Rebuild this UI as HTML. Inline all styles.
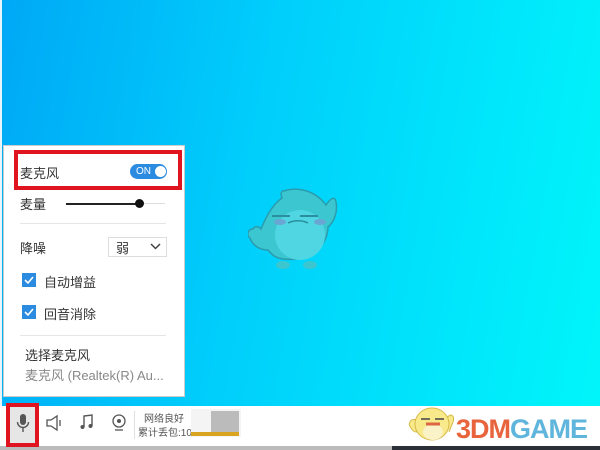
<!DOCTYPE html>
<html><head><meta charset="utf-8"><style>
*{margin:0;padding:0;box-sizing:border-box}
body{width:600px;height:450px;overflow:hidden;position:relative;font-family:"Liberation Sans","Noto Sans CJK SC",sans-serif;background:linear-gradient(100deg,#00a8f6 0%,#00cdfb 40%,#00e6fb 75%,#00f6fa 100%)}
.abs{position:absolute}
.panel{left:3px;top:145px;width:182px;height:252px;background:#fff;border:1px solid #ccc}
.t{font-size:13px;color:#333;position:absolute;white-space:nowrap}
.red{border:4px solid #e0141e;position:absolute}
.bar{left:0;top:406px;width:600px;height:40px;background:#fff}
</style></head><body>
<div class="abs" style="left:0;top:0;width:2px;height:406px;background:#e8f6fb"></div>
<div class="abs panel"></div>
<div class="t" style="left:20px;top:163px">麦克风</div>
<div class="abs" style="left:130px;top:164px;width:37px;height:15px;border-radius:8px;background:#2a8be0"></div>
<div class="abs" style="left:136px;top:166px;font-size:10px;line-height:11px;color:#fff">ON</div>
<div class="abs" style="left:155px;top:166px;width:11px;height:11px;border-radius:50%;background:#fff"></div>
<div class="red" style="left:14px;top:150px;width:168px;height:40px"></div>
<div class="t" style="left:20px;top:194px">麦量</div>
<div class="abs" style="left:66px;top:203px;width:74px;height:2px;background:#222"></div>
<div class="abs" style="left:140px;top:203px;width:25px;height:1px;background:#ddd"></div>
<div class="abs" style="left:135px;top:199px;width:9px;height:9px;border-radius:50%;background:#111"></div>
<div class="abs" style="left:20px;top:223px;width:146px;height:1px;background:#e6e6e6"></div>
<div class="t" style="left:20px;top:238px">降噪</div>
<div class="abs" style="left:108px;top:237px;width:59px;height:20px;border:1px solid #ddd"></div>
<div class="t" style="left:116px;top:238px">弱</div>
<svg class="abs" style="left:150px;top:243px" width="11" height="7"><path d="M1 1L5.5 5.5 10 1" fill="none" stroke="#444" stroke-width="1.5"/></svg>
<svg class="abs" style="left:22px;top:273px" width="14" height="14"><rect width="14" height="14" fill="#2a8be0"/><path d="M3 7l3 3 5-6" fill="none" stroke="#fff" stroke-width="1.6"/></svg>
<div class="t" style="left:44px;top:272px">自动增益</div>
<svg class="abs" style="left:22px;top:305px" width="14" height="14"><rect width="14" height="14" fill="#2a8be0"/><path d="M3 7l3 3 5-6" fill="none" stroke="#fff" stroke-width="1.6"/></svg>
<div class="t" style="left:44px;top:304px">回音消除</div>
<div class="abs" style="left:20px;top:335px;width:146px;height:1px;background:#e6e6e6"></div>
<div class="t" style="left:25px;top:345px">选择麦克风</div>
<div class="t" style="left:25px;top:365px;color:#888">麦克风 (Realtek(R) Au...</div>
<div class="abs bar"></div>
<div class="abs" style="left:0;top:446px;width:600px;height:4px;background:#bbb"></div>
<div class="abs" style="left:392px;top:446px;width:208px;height:4px;background:#2a2f38"></div>
<div class="abs" style="left:10px;top:407px;width:26px;height:36px;background:#e6e6e6"></div>
<svg class="abs" style="left:14px;top:412px" width="18" height="24"><rect x="6" y="2" width="6" height="11" rx="3" fill="#555"/><path d="M3.5 10a5.5 5.5 0 0 0 11 0M9 16v4" fill="none" stroke="#555" stroke-width="1.4"/></svg>
<div class="red" style="left:6px;top:403px;width:33px;height:44px"></div>
<svg class="abs" style="left:45px;top:414px" width="18" height="18"><path d="M2 6h4l6-4v14l-6-4H2z" fill="none" stroke="#555" stroke-width="1.3"/><path d="M15 6v6" stroke="#555" stroke-width="1.3"/></svg>
<svg class="abs" style="left:78px;top:413px" width="18" height="18"><path d="M6 14V3l8-1v11" fill="none" stroke="#555" stroke-width="1.4"/><circle cx="4.5" cy="14" r="2" fill="#555"/><circle cx="12.5" cy="13" r="2" fill="#555"/></svg>
<svg class="abs" style="left:110px;top:413px" width="18" height="20"><circle cx="9" cy="8" r="6" fill="none" stroke="#555" stroke-width="1.3"/><circle cx="9" cy="8" r="2" fill="#555"/><path d="M5 17h8" stroke="#555" stroke-width="1.3"/></svg>
<div class="abs" style="left:134px;top:411px;width:1px;height:28px;background:#e0e0e0"></div>
<div class="abs" style="left:144px;top:410px;font-size:10px;color:#555">网络良好</div>
<div class="abs" style="left:138px;top:424px;font-size:10px;color:#555">累计丢包:10</div>
<div class="abs" style="left:191px;top:409px;width:50px;height:28px;background:#f4f4f4"></div>
<div class="abs" style="left:211px;top:411px;width:28px;height:22px;background:#bbb"></div>
<div class="abs" style="left:191px;top:432px;width:48px;height:4px;background:#d9a520"></div>
<svg class="abs" style="left:248px;top:180px" width="105" height="92">
<path d="M34 18c-2-5 0-8 2-7 12-4 30-2 42 14 4-6 9-10 10-3 2 10-2 20-8 25 0 20-20 35-45 32-8-1-12-5-15-9-10 0-16-6-18-12-4-3-2-9 3-9 1-3 6-3 8 0 5-12 11-24 21-31z" fill="#3cc6cf" stroke="#2a9cae" stroke-width="1.5"/>
<ellipse cx="52" cy="55" rx="25" ry="25" fill="#4fd6e2"/>
<path d="M24 36h18M52 36h18" stroke="#2a8e9e" stroke-width="2"/>
<ellipse cx="32" cy="42" rx="6" ry="3" fill="#6aa6d4"/><ellipse cx="72" cy="42" rx="6" ry="3" fill="#6aa6d4"/>
<path d="M40 43c6-3 14-3 20 0" fill="none" stroke="#2a8e9e" stroke-width="1.5"/>
<ellipse cx="35" cy="85" rx="7" ry="4" fill="#3cc6cf"/><ellipse cx="62" cy="85" rx="7" ry="4" fill="#3cc6cf"/>
</svg>
<svg class="abs" style="left:407px;top:400px" width="50" height="45"><path d="M10 20c-6-2-10 3-6 8 3 5 6 4 8 4M40 18c4-6 8-2 6 4l-4 10" fill="#f8e98a" stroke="#d6b94a"/><ellipse cx="25" cy="24" rx="17" ry="16" fill="#f8e98a" stroke="#d6b94a"/><ellipse cx="26" cy="32" rx="10" ry="8" fill="#fbf3c8"/><path d="M14 19h9M28 19h9" stroke="#444" stroke-width="1.5"/><path d="M19 24h14" stroke="#d64" stroke-width="3"/></svg>
<div class="abs" style="left:456px;top:414px;font-size:27px;font-weight:bold;letter-spacing:-1px;line-height:30px"><span style="color:#e8643c">3DM</span><span style="color:#5fb5dc">GAME</span></div>
</body></html>
